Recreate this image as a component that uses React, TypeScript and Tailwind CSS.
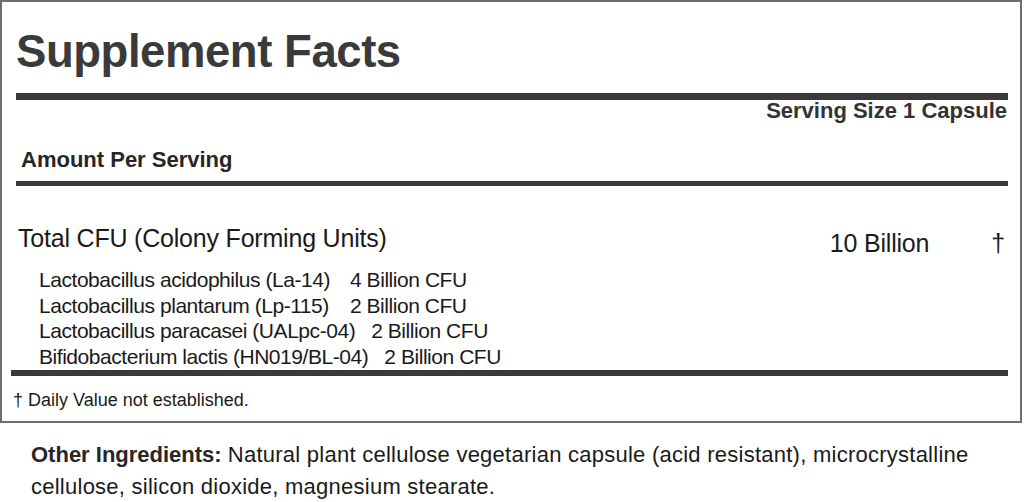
export default function App() {
  const font = { fontFamily: '"Liberation Sans", Arial, Helvetica, sans-serif' };
  return (
    <div className="w-[1024px] h-[502px] bg-white overflow-hidden" style={font}>
      <div className="w-[1022px] h-[423px] border-2 border-[#6e6e6e] flex flex-col">
        <div className="pl-[14px] pr-[12px]">
          <h1 className="mt-[25px] text-[45.5px] leading-[50px] tracking-[-0.45px] font-bold text-[#3a3a3a]">Supplement Facts</h1>
          <div className="mt-[16px] h-[7px] bg-[#3a3a3a]" />
          <div className="text-right pr-[1px] text-[22px] leading-[22px] font-bold text-[#333333]">Serving Size 1 Capsule</div>
          <div className="mt-[27px] pl-[5px] text-[22px] leading-[22px] font-bold text-[#262626]">Amount Per Serving</div>
          <div className="mt-[10px] h-[5px] bg-[#3a3a3a]" />
        </div>
        <div className="mt-[38px] pl-[16px] pr-[15px] h-[28px] flex items-start justify-between text-[25px] leading-[28px] tracking-[-0.2px] text-[#1a1a1a]">
          <span>Total CFU (Colony Forming Units)</span>
          <div className="flex items-start">
            <span className="mt-[5px]">10 Billion</span>
            <span className="ml-[62px] mt-[5px]">†</span>
          </div>
        </div>
        <div className="mt-[15px] pl-[37px] text-[21px] leading-[25.7px] tracking-[-0.45px] text-[#1a1a1a]">
          <div>Lactobacillus acidophilus (La-14)<span className="ml-[20px]">4 Billion CFU</span></div>
          <div>Lactobacillus plantarum (Lp-115)<span className="ml-[21px]">2 Billion CFU</span></div>
          <div>Lactobacillus paracasei (UALpc-04)<span className="ml-[16px]">2 Billion CFU</span></div>
          <div>Bifidobacterium lactis (HN019/BL-04)<span className="ml-[16px]">2 Billion CFU</span></div>
        </div>
        <div className="pl-[9px] pr-[12px]">
          <div className="h-[6px] bg-[#3a3a3a]" />
        </div>
        <div className="mt-[13px] pl-[11px] text-[18px] leading-[22px] text-[#1a1a1a]">† Daily Value not established.</div>
      </div>
      <p className="mt-[16px] pl-[31px] text-[22px] leading-[32px] text-[#1a1a1a]">
        <span className="font-bold text-[#262626]">Other Ingredients:</span>{" "}
        <span className="tracking-[0.25px]">Natural plant cellulose vegetarian capsule (acid resistant), microcrystalline</span>
        <br />
        <span className="tracking-[0.25px]">cellulose, silicon dioxide, magnesium stearate.</span>
      </p>
    </div>
  );
}
